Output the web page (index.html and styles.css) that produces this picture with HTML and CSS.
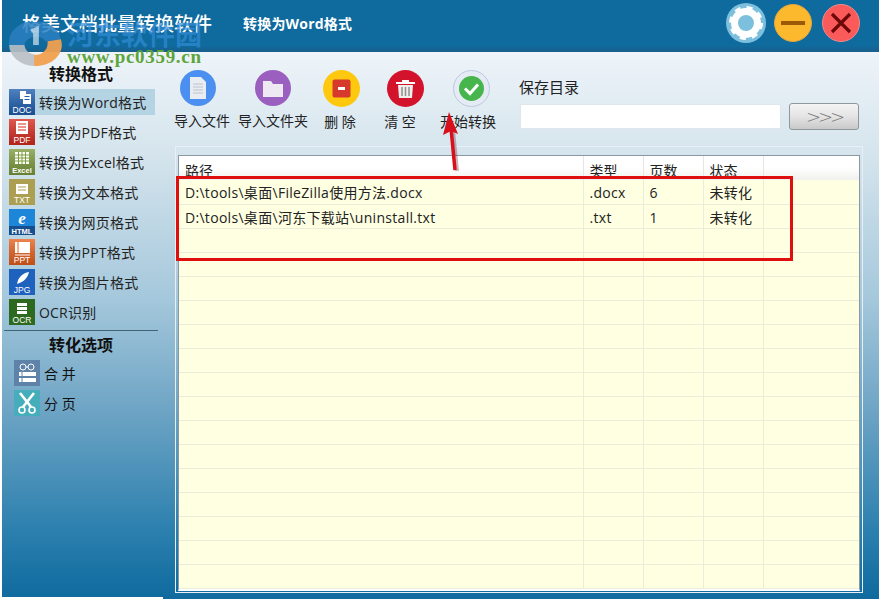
FILE: index.html
```html
<!DOCTYPE html>
<html lang="zh-CN">
<head>
    <meta charset="UTF-8">
    <title>格美文档批量转换软件</title>
    <link rel="stylesheet" href="styles.css">
</head>
<body>
<div class="window">
    <div class="titlebar">
        <span class="app-name">格美文档批量转换软件</span>
        <span class="mode-name">转换为Word格式</span>
        <div class="win-btns">
            <svg class="btn-gear" width="40" height="40" viewBox="0 0 40 40">
                <circle cx="20" cy="20" r="20" fill="#7cc0de"/>
                <circle cx="20" cy="20" r="11.5" fill="none" stroke="#fff" stroke-width="7"/>
                <circle cx="20" cy="20" r="15" fill="none" stroke="#fff" stroke-width="4" stroke-dasharray="5.8 6"/>
                <circle cx="20" cy="20" r="5.5" fill="none" stroke="#7cc0de" stroke-width="3.5"/>
            </svg>
            <svg width="38" height="38" viewBox="0 0 38 38">
                <circle cx="19" cy="19" r="18.5" fill="#fdb92e" stroke="#e2a63a"/>
                <rect x="7" y="17" width="24" height="4" fill="#9a5a08"/>
            </svg>
            <svg width="38" height="38" viewBox="0 0 38 38">
                <circle cx="19" cy="19" r="18.5" fill="#fa5a5a" stroke="#f08a8a"/>
                <path d="M10 10 L28 28 M28 10 L10 28" stroke="#6d0808" stroke-width="3.2"/>
            </svg>
        </div>
    </div>

    <div class="main">
        <div class="sidebar">
            <h4>转换格式</h4>
            <div class="fmt active">
                <svg class="tile" viewBox="0 0 26 26"><defs><linearGradient id="shine" x1="0" y1="0" x2="0" y2="1"><stop offset="0" stop-color="#fff" stop-opacity=".22"/><stop offset="1" stop-color="#000" stop-opacity=".18"/></linearGradient></defs><rect width="26" height="26" fill="#1f5fb0"/><rect width="26" height="26" fill="url(#shine)"/><rect x="11" y="2" width="6" height="8" fill="#fff"/><rect x="14" y="5" width="8" height="10" fill="#fff"/><rect x="15.500" y="7" width="5" height="1" fill="#1f5fb0"/><rect x="15.500" y="10" width="5" height="1" fill="#1f5fb0"/><text x="13" y="24" class="tile-text">DOC</text></svg>
                <span>转换为Word格式</span>
            </div>
            <div class="fmt">
                <svg class="tile" viewBox="0 0 26 26"><rect width="26" height="26" fill="#d62b1f"/><rect width="26" height="26" fill="url(#shine)"/><path d="M7 2h12v13H7z" fill="#fff"/><path d="M9 5h8M9 8h8M9 11h8" stroke="#d62b1f" stroke-width="1.200"/><text x="13" y="24" class="tile-text">PDF</text></svg>
                <span>转换为PDF格式</span>
            </div>
            <div class="fmt">
                <svg class="tile" viewBox="0 0 26 26"><rect width="26" height="26" fill="#7d9b3c"/><rect width="26" height="26" fill="url(#shine)"/><path d="M6 3h14v12H6z" fill="#fff"/><path d="M6 6h14M6 9h14M6 12h14M9.500 3v12M13 3v12M16.500 3v12" stroke="#7d9b3c"/><text x="13" y="24" class="tile-text tile-small">Excel</text></svg>
                <span>转换为Excel格式</span>
            </div>
            <div class="fmt">
                <svg class="tile" viewBox="0 0 26 26"><rect width="26" height="26" fill="#ad9f52"/><path d="M7 5h12v10H7z" fill="#fff"/><path d="M9 8h8M9 11h8" stroke="#ad9f52" stroke-width="1.200"/><text x="13" y="24" class="tile-text">TXT</text></svg>
                <span>转换为文本格式</span>
            </div>
            <div class="fmt">
                <svg class="tile" viewBox="0 0 26 26"><rect width="26" height="26" fill="#1d86d8"/><rect y="17" width="26" height="9" fill="#174f8e"/><text x="13" y="15" class="tile-e">e</text><text x="13" y="24.500" class="tile-text tile-small">HTML</text></svg>
                <span>转换为网页格式</span>
            </div>
            <div class="fmt">
                <svg class="tile" viewBox="0 0 26 26"><rect width="26" height="26" fill="#e8601c"/><rect width="26" height="26" fill="url(#shine)"/><path d="M6 3h15v11H6z" fill="#fff"/><path d="M9 3v11" stroke="#e8601c"/><path d="M6 16h15" stroke="#fff"/><text x="13" y="24" class="tile-text">PPT</text></svg>
                <span>转换为PPT格式</span>
            </div>
            <div class="fmt">
                <svg class="tile" viewBox="0 0 26 26"><rect width="26" height="26" fill="#1e62bd"/><path d="M8 15 C9 8 14 4 20 3 C19 8 15 13 8 15z" fill="#fff"/><text x="13" y="24" class="tile-text">JPG</text></svg>
                <span>转换为图片格式</span>
            </div>
            <div class="fmt">
                <svg class="tile" viewBox="0 0 26 26"><rect width="26" height="26" fill="#2d6a1f"/><path d="M8 4h10v3H8zM8 8h10v3H8zM8 12h10v3H8z" fill="#fff"/><text x="13" y="24" class="tile-text">OCR</text></svg>
                <span>OCR识别</span>
            </div>

            <div class="divider"></div>

            <h4>转化选项</h4>
            <div class="opt">
                <svg class="tile" viewBox="0 0 26 26"><rect width="26" height="26" fill="#5f83a8"/><circle cx="9" cy="7" r="3" fill="none" stroke="#fff"/><circle cx="17" cy="7" r="3" fill="none" stroke="#fff"/><path d="M12 7h2" stroke="#fff"/><rect x="5" y="12" width="17" height="4" fill="#fff"/><rect x="5" y="18" width="17" height="4" fill="#fff"/><path d="M8 12v4M8 18v4" stroke="#5f83a8"/></svg>
                <span>合 并</span>
            </div>
            <div class="opt">
                <svg class="tile" viewBox="0 0 26 26"><rect width="26" height="26" fill="#46aebb"/><path d="M6 3 L17 17 M20 3 L9 17" stroke="#fff" stroke-width="2.600"/><circle cx="8" cy="20" r="3" fill="none" stroke="#fff" stroke-width="1.600"/><circle cx="18" cy="20" r="3" fill="none" stroke="#fff" stroke-width="1.600"/></svg>
                <span>分 页</span>
            </div>
        </div>

        <div class="content">
            <div class="toolbar">
                <div class="tool tool-file">
                    <svg width="36" height="36" viewBox="0 0 36 36"><circle cx="18" cy="18" r="18" fill="#4b8ff0"/><path d="M10 7h11l5 5v17H10z" fill="#e9edf2"/><path d="M13 14h10M13 17h10M13 20h10M13 23h10" stroke="#b9c3cc"/></svg>
                    <span>导入文件</span>
                </div>
                <div class="tool tool-folder">
                    <svg width="36" height="36" viewBox="0 0 36 36"><circle cx="18" cy="18" r="18" fill="#9b5fc0"/><path d="M8 11h8l2 3h10v13H8z" fill="#eee8f2"/></svg>
                    <span>导入文件夹</span>
                </div>
                <div class="tool tool-del">
                    <svg width="37" height="37" viewBox="0 0 37 37"><circle cx="18.500" cy="18.500" r="18.500" fill="#fdc80e"/><rect x="9.500" y="9.500" width="18" height="18" rx="2" fill="#d63a2c"/><rect x="15" y="17" width="7" height="3" fill="#fff"/></svg>
                    <span>删 除</span>
                </div>
                <div class="tool tool-clear">
                    <svg width="37" height="37" viewBox="0 0 37 37"><circle cx="18.500" cy="18.500" r="18.500" fill="#d3122b"/><path d="M9 12h19v2H9z M15 10h7v2h-7z" fill="#fff"/><path d="M11 15h15l-1 13H12z" fill="#f0eded"/><path d="M15 17v9M18.500 17v9M22 17v9" stroke="#909090" stroke-width="1.500"/></svg>
                    <span>清 空</span>
                </div>
                <div class="tool tool-start">
                    <svg width="37" height="37" viewBox="0 0 37 37"><circle cx="18.500" cy="18.500" r="18" fill="#e4ebf5" stroke="#bcc8de"/><circle cx="18.500" cy="18.500" r="12.500" fill="#46b54c"/><path d="M12 18.500 L17 23.500 L25 14.500" fill="none" stroke="#fff" stroke-width="3"/></svg>
                    <span>开始转换</span>
                </div>
                <div class="save-box">
                    <label>保存目录</label>
                    <div class="save-row">
                        <input type="text" class="save-input">
                        <button class="save-btn">&gt;&gt;&gt;</button>
                    </div>
                </div>
            </div>

            <div class="panel">
                <div class="grid-wrap">
                    <table class="grid">
                        <thead>
                            <tr><th class="col-path">路径</th><th class="col-n">类型</th><th class="col-n">页数</th><th class="col-n">状态</th><th></th></tr>
                        </thead>
                        <tbody>
                            <tr><td>D:\tools\桌面\FileZilla使用方法.docx</td><td>.docx</td><td>6</td><td>未转化</td><td></td></tr>
                            <tr><td>D:\tools\桌面\河东下载站\uninstall.txt</td><td>.txt</td><td>1</td><td>未转化</td><td></td></tr>
                            <tr><td></td><td></td><td></td><td></td><td></td></tr>
                            <tr><td></td><td></td><td></td><td></td><td></td></tr>
                            <tr><td></td><td></td><td></td><td></td><td></td></tr>
                            <tr><td></td><td></td><td></td><td></td><td></td></tr>
                            <tr><td></td><td></td><td></td><td></td><td></td></tr>
                            <tr><td></td><td></td><td></td><td></td><td></td></tr>
                            <tr><td></td><td></td><td></td><td></td><td></td></tr>
                            <tr><td></td><td></td><td></td><td></td><td></td></tr>
                            <tr><td></td><td></td><td></td><td></td><td></td></tr>
                            <tr><td></td><td></td><td></td><td></td><td></td></tr>
                            <tr><td></td><td></td><td></td><td></td><td></td></tr>
                            <tr><td></td><td></td><td></td><td></td><td></td></tr>
                            <tr><td></td><td></td><td></td><td></td><td></td></tr>
                            <tr><td></td><td></td><td></td><td></td><td></td></tr>
                            <tr><td></td><td></td><td></td><td></td><td></td></tr>
                            <tr><td></td><td></td><td></td><td></td><td></td></tr>
                        </tbody>
                    </table>
                </div>
            </div>
        </div>
    </div>

    <!-- annotations drawn on top of the screenshot -->
    <div class="red-box"></div>
    <svg class="red-arrow" width="24" height="64" viewBox="0 0 24 64">
        <path d="M15 60 L11 20" stroke="#70303a" stroke-width="4" opacity=".35" transform="translate(2 1)"/>
        <path d="M15 60 L11 18" stroke="#d8101c" stroke-width="3.500"/>
        <path d="M9 2 L18 24 L11 21 L3 25 Z" fill="#d8101c"/>
    </svg>

    <!-- watermark -->
    <div class="wm">
        <svg class="wm-logo" width="56" height="44" viewBox="0 0 58 46">
            <path d="M2 24 A27 22 0 0 1 56 18 L40 20 A12 10 0 0 0 18 24 Z" fill="#2a7fc0" opacity=".85"/>
            <path d="M24 8 L33 4 L33 24 L27 24 L27 12 Z" fill="#d6e6f0" opacity=".7"/>
            <path d="M2 24 A27 22 0 0 0 28 46 L28 34 A12 10 0 0 1 18 24 Z" fill="#b9bfc4" opacity=".9"/>
            <path d="M28 46 A27 22 0 0 0 56 18 L42 20 A12 12 0 0 1 28 34 Z" fill="#f0a050" opacity=".95"/>
        </svg>
        <div class="wm-text">
            <div class="wm-cn">河东软件园</div>
            <div class="wm-url">www.pc0359.cn</div>
        </div>
    </div>
    <div class="notch"></div>
</div>
</body>
</html>
```

FILE: styles.css
```css
*{
    box-sizing: border-box;
}
body{
    margin: 0;
    background-color: #fff;
    font-family: "Open Sans", "Noto Sans CJK SC", sans-serif;
    font-size: 14px;
    color: #222;
}
.window{
    position: relative;
    width: 877px;
    height: 599px;
    margin-left: 2px;
    display: flex;
    flex-direction: column;
    overflow: hidden;
}

/* title bar */
.titlebar{
    height: 52px;
    flex: none;
    display: flex;
    align-items: center;
    padding: 0 19px 6px 20px;
    color: #fff;
    background: linear-gradient(#0f6a9e, #0f6a9e 88%, #1a5f8c);
}
.app-name{
    font-size: 19px;
    font-weight: 500;
    width: 221px;
}
.mode-name{
    font-size: 14px;
    font-weight: bold;
    letter-spacing: .2px;
}
.win-btns{
    margin-left: auto;
    display: flex;
    align-items: center;
    gap: 10px;
}
.btn-gear{
    margin-right: -2px;
}

/* main */
.main{
    flex: 1;
    display: flex;
    background: linear-gradient(#eef4f9, #d3e3ec 20%, #a5c8dc 45%, #6fa5c5 65%, #2a7fae 88%, #0f6a9e 100%);
}
.sidebar{
    width: 160px;
    flex: none;
    padding: 10px 0 0 7px;
}
.sidebar h4{
    margin: 0;
    height: 25px;
    line-height: 25px;
    width: 144px;
    font-size: 16px;
    font-weight: bold;
    text-align: center;
    color: #111;
}
.fmt{
    width: 146px;
    height: 30px;
    display: flex;
    align-items: center;
    gap: 4px;
    letter-spacing: .2px;
}
.fmt.active{
    background: linear-gradient(transparent 2px, #b4d3e3 2px, #b4d3e3 28px, transparent 28px);
}
.tile{
    width: 26px;
    height: 26px;
    flex: none;
}
.tile-text{
    font-family: "Liberation Sans", sans-serif;
    font-size: 8.500px;
    fill: #fff;
    text-anchor: middle;
    letter-spacing: 0;
}
.tile-small{
    font-size: 7.500px;
    font-weight: bold;
}
.tile-e{
    font-family: "Liberation Serif", serif;
    font-size: 17px;
    font-weight: bold;
    font-style: italic;
    fill: #fff;
    text-anchor: middle;
}
.divider{
    width: 154px;
    height: 1px;
    margin: 3px 0 2px -5px;
    background-color: #3f6377;
}
.opt{
    height: 30px;
    display: flex;
    align-items: center;
    gap: 4px;
    padding-left: 5px;
    color: #111;
}

/* toolbar */
.content{
    flex: 1;
    display: flex;
    flex-direction: column;
    padding-left: 13px;
}
.toolbar{
    height: 94px;
    flex: none;
    display: flex;
    align-items: flex-start;
}
.tool{
    display: flex;
    flex-direction: column;
    align-items: center;
    gap: 5px;
    padding-top: 18px;
    white-space: nowrap;
}
.tool span{
    line-height: 20px;
}
.tool-file{
    width: 60px;
    margin-left: -3px;
}
.tool-file svg{
    margin-right: 8px;
}
.tool-folder{
    width: 70px;
    margin-left: 6px;
}
.tool-del{
    width: 36px;
    margin-left: 14px;
}
.tool-del svg{
    margin-left: 3px;
}
.tool-clear{
    width: 36px;
    margin-left: 24px;
}
.tool-clear svg{
    margin-left: 11px;
}
.tool-start{
    width: 60px;
    margin-left: 20px;
}
.tool-start svg{
    margin-left: 7px;
}
.save-box{
    margin-left: 21px;
    padding-top: 26px;
}
.save-box label{
    display: block;
    height: 18px;
    line-height: 18px;
    margin-bottom: 7px;
    font-size: 15px;
}
.save-row{
    display: flex;
    align-items: center;
    gap: 8px;
    margin-left: 1px;
}
.save-input{
    width: 261px;
    height: 25px;
    border: 1px solid #dfe7ec;
    background-color: #fff;
}
.save-btn{
    width: 70px;
    height: 27px;
    padding: 0;
    border: 1px solid #8d979e;
    border-radius: 3px;
    background: linear-gradient(#f4f4f4, #e4e4e4 50%, #c9c9c9);
    font-family: "DejaVu Sans", sans-serif;
    font-size: 18px;
    font-weight: 200;
    line-height: 22px;
    color: #6f6f6f;
    letter-spacing: -3px;
}

/* list */
.panel{
    width: 688px;
    height: 447px;
    padding: 8px 2px 1px 2px;
    border: 1px solid #e8f0f5;
}
.grid-wrap{
    height: 100%;
    overflow: hidden;
    border-top: 1px solid #8b98a2;
    border-left: 1px solid #8b98a2;
    border-right: 1px solid #8b98a2;
    border-bottom: 2px solid #ffffff;
    background-color: #ffffe2;
}
.grid{
    width: 100%;
    table-layout: fixed;
    border-collapse: collapse;
}
.grid th{
    height: 24px;
    padding: 6px 0 0 6px;
    text-align: left;
    font-weight: normal;
    line-height: 18px;
    vertical-align: top;
    overflow: hidden;
    border-right: 1px solid #e6e6e6;
    background: linear-gradient(#fff, #fff 50%, #f0f0ee);
}
.grid th:last-child{
    border-right: 0;
}
.col-path{
    width: 404px;
}
.col-n{
    width: 60px;
}
.grid td{
    height: 24px;
    padding: 3px 0 0 6px;
    line-height: 20px;
    letter-spacing: .3px;
    border-right: 1px solid #ecedd8;
    border-bottom: 1px solid #ecedd8;
    white-space: nowrap;
    overflow: hidden;
}
.grid td:last-child{
    border-right: 0;
}

/* annotations */
.red-box{
    position: absolute;
    left: 174px;
    top: 176px;
    width: 617px;
    height: 85px;
    border: 3px solid #e00f0f;
}
.red-arrow{
    position: absolute;
    left: 438px;
    top: 110px;
}
.wm{
    position: absolute;
    left: 5px;
    top: 22px;
    display: flex;
    gap: 4px;
    pointer-events: none;
}
.wm-cn{
    font-size: 27px;
    font-weight: bold;
    line-height: 26px;
    color: rgba(50, 140, 215, .7);
}
.wm-url{
    font-family: "Liberation Serif", serif;
    font-size: 19px;
    font-weight: bold;
    letter-spacing: .7px;
    line-height: 18px;
    color: #5da53a;
}
.notch{
    position: absolute;
    left: -2px;
    bottom: 0;
    width: 163px;
    height: 2px;
    background-color: #fff;
}
```
